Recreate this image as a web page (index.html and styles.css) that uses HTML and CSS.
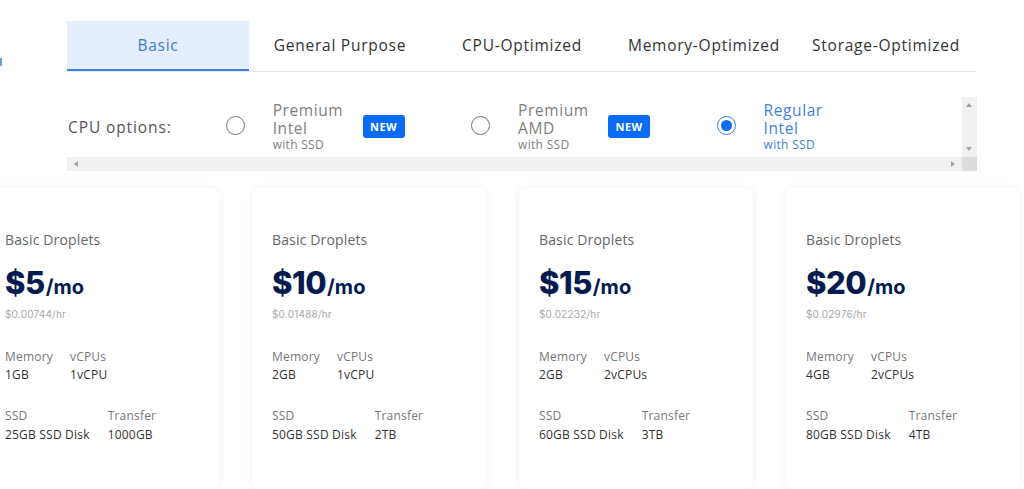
FILE: index.html
```html
<!DOCTYPE html>
<html>
<head>
<meta charset="utf-8">
<link rel="stylesheet" href="styles.css">
</head>
<body>
<div class="top">
  <div class="edge-mark"></div>
  <div class="main">
    <nav class="tabs">
      <div class="tab active">Basic</div>
      <div class="tab">General Purpose</div>
      <div class="tab">CPU-Optimized</div>
      <div class="tab">Memory-Optimized</div>
      <div class="tab">Storage-Optimized</div>
    </nav>
    <div class="scroller">
      <div class="options">
        <div class="opt-label">CPU options:</div>
        <div class="option">
          <span class="radio"></span>
          <div class="opt-text"><div class="opt-name">Premium<br>Intel</div><div class="opt-sub">with SSD</div></div>
          <span class="badge">NEW</span>
        </div>
        <div class="option">
          <span class="radio"></span>
          <div class="opt-text"><div class="opt-name">Premium<br>AMD</div><div class="opt-sub">with SSD</div></div>
          <span class="badge">NEW</span>
        </div>
        <div class="option selected">
          <span class="radio"><span class="dot"></span></span>
          <div class="opt-text"><div class="opt-name">Regular<br>Intel</div><div class="opt-sub">with SSD</div></div>
        </div>
      </div>
      <div class="vbar"><span class="arr up"></span><span class="arr down"></span></div>
      <div class="hbar"><span class="arr left"></span><span class="arr right"></span></div>
      <div class="corner"></div>
    </div>
  </div>
</div>

<div class="cards">
  <div class="card">
    <div class="kind">Basic Droplets</div>
    <div class="price">$5<span class="per">/mo</span></div>
    <div class="hourly">$0.00744/hr</div>
    <div class="specs"><div><div class="lbl">Memory</div><div class="val">1GB</div></div><div><div class="lbl">vCPUs</div><div class="val">1vCPU</div></div></div>
    <div class="specs specs2"><div><div class="lbl">SSD</div><div class="val">25GB SSD Disk</div></div><div><div class="lbl">Transfer</div><div class="val">1000GB</div></div></div>
  </div>
  <div class="card">
    <div class="kind">Basic Droplets</div>
    <div class="price">$10<span class="per">/mo</span></div>
    <div class="hourly">$0.01488/hr</div>
    <div class="specs"><div><div class="lbl">Memory</div><div class="val">2GB</div></div><div><div class="lbl">vCPUs</div><div class="val">1vCPU</div></div></div>
    <div class="specs specs2"><div><div class="lbl">SSD</div><div class="val">50GB SSD Disk</div></div><div><div class="lbl">Transfer</div><div class="val">2TB</div></div></div>
  </div>
  <div class="card">
    <div class="kind">Basic Droplets</div>
    <div class="price">$15<span class="per">/mo</span></div>
    <div class="hourly">$0.02232/hr</div>
    <div class="specs"><div><div class="lbl">Memory</div><div class="val">2GB</div></div><div><div class="lbl">vCPUs</div><div class="val">2vCPUs</div></div></div>
    <div class="specs specs2"><div><div class="lbl">SSD</div><div class="val">60GB SSD Disk</div></div><div><div class="lbl">Transfer</div><div class="val">3TB</div></div></div>
  </div>
  <div class="card">
    <div class="kind">Basic Droplets</div>
    <div class="price">$20<span class="per">/mo</span></div>
    <div class="hourly">$0.02976/hr</div>
    <div class="specs"><div><div class="lbl">Memory</div><div class="val">4GB</div></div><div><div class="lbl">vCPUs</div><div class="val">2vCPUs</div></div></div>
    <div class="specs specs2"><div><div class="lbl">SSD</div><div class="val">80GB SSD Disk</div></div><div><div class="lbl">Transfer</div><div class="val">4TB</div></div></div>
  </div>
</div>
</body>
</html>
```
FILE: styles.css
```css
* { box-sizing: border-box; }
html, body { margin: 0; padding: 0; background: #fff; overflow: hidden; }
body { font-family: "Open Sans", "Liberation Sans", sans-serif; color: #333; width: 1024px; height: 489px; }

.top { display: flex; padding-top: 21px; }
.edge-mark { width: 2px; height: 8px; margin-top: 37px; background: #6d9ad8; }
.main { margin-left: 65px; width: 910px; }

.tabs { display: flex; border-bottom: 1px solid #e4e6ea; }
.tab { flex: 1; height: 50px; display: flex; align-items: center; justify-content: center; font-size: 15.5px; letter-spacing: 0.75px; color: #333; padding-bottom: 3px; }
.tab.active { background: #e5eefc; color: #3f78d4; border-bottom: 2px solid #3b7fe0; margin-bottom: -1px; padding-bottom: 1px; }

.scroller { margin-top: 25px; display: grid; grid-template-columns: 895px 15px; grid-template-rows: 60px 14px; }
.options { display: flex; align-items: center; background: #fff; padding-bottom: 2px; }
.opt-label { width: 159px; padding-left: 1px; font-size: 15.5px; letter-spacing: 0.9px; color: #555; padding-top: 2px; }
.option { width: 246px; display: flex; align-items: center; }
.radio { width: 19px; height: 19px; border: 1px solid #777; border-radius: 50%; display: flex; align-items: center; justify-content: center; margin-top: -1px; }
.opt-text { margin-left: 28px; width: 90px; color: #808080; }
.opt-name { font-size: 15.5px; line-height: 18px; letter-spacing: 0.6px; }
.opt-sub { font-size: 12px; line-height: 15px; letter-spacing: 0.3px; }
.badge { width: 42px; height: 23px; border-radius: 3px; background: #0a6cf5; color: #fff; font-size: 11px; font-weight: 700; letter-spacing: 0.5px; display: flex; align-items: center; justify-content: center; margin-top: 1px; }
.option.selected .radio { border-color: #3d7fdc; }
.dot { width: 11px; height: 11px; border-radius: 50%; background: #0b6cf0; }
.option.selected .opt-text { color: #3d7fdc; }

.vbar { background: #f1f1f1; position: relative; }
.hbar { background: #f1f1f1; position: relative; }
.corner { background: #dcdcdc; }
.arr { position: absolute; width: 0; height: 0; }
.arr.up { left: 4px; top: 6px; border-left: 3px solid transparent; border-right: 3px solid transparent; border-bottom: 4px solid #a3a3a3; }
.arr.down { left: 4px; bottom: 6px; border-left: 3px solid transparent; border-right: 3px solid transparent; border-top: 4px solid #a3a3a3; }
.arr.left { left: 7px; top: 4px; border-top: 3px solid transparent; border-bottom: 3px solid transparent; border-right: 4px solid #a3a3a3; }
.arr.right { right: 7px; top: 4px; border-top: 3px solid transparent; border-bottom: 3px solid transparent; border-left: 4px solid #a3a3a3; }

.cards { display: flex; gap: 33px; margin-left: -15px; margin-top: 17px; }
.card { flex: 0 0 234px; height: 301px; background: #fff; border-radius: 8px; box-shadow: 0 0 10px rgba(30, 40, 70, 0.06); padding: 43px 20px 0; }
.kind { font-size: 14px; color: #666; line-height: 18px; letter-spacing: 0.15px; }
.price { margin-top: 16px; font-family: "Inter", "Liberation Sans", sans-serif; font-weight: 800; font-size: 31px; line-height: 36px; color: #031b4e; letter-spacing: -0.5px; }
.per { font-size: 20px; font-weight: 700; margin-left: 1px; letter-spacing: 0; }
.hourly { margin-top: 2px; font-size: 10px; line-height: 14px; color: #a8a8a8; font-family: "Inter", "Liberation Sans", sans-serif; letter-spacing: 0.2px; }
.specs { display: flex; gap: 17px; margin-top: 27px; font-size: 12px; line-height: 18px; letter-spacing: 0.2px; }
.specs2 { margin-top: 23px; gap: 18px; }
.specs2 .val { margin-top: 1px; }
.lbl { color: #777; }
.val { color: #333; }
```
